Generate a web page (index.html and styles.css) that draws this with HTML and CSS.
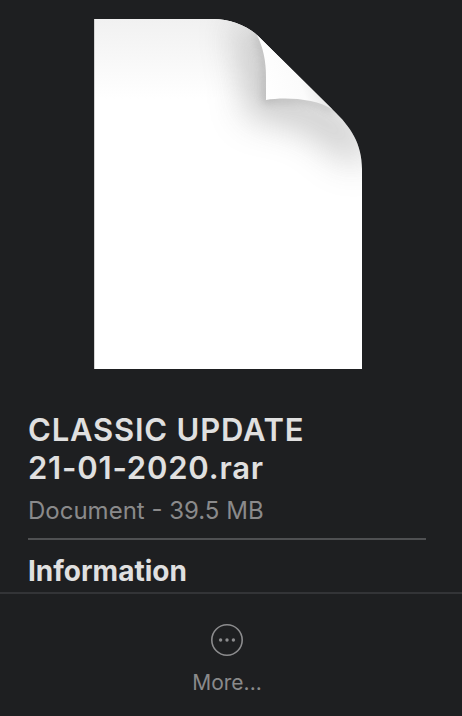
FILE: index.html
```html
<!DOCTYPE html>
<html lang="en">
<head>
<meta charset="utf-8">
<title>File preview</title>
<link rel="stylesheet" href="styles.css">
</head>
<body>
<main class="panel">
  <section class="content">
    <div class="preview">
      <svg class="doc" width="268" height="350" viewBox="0 0 268 350" aria-hidden="true">
        <defs>
          <linearGradient id="top" gradientUnits="userSpaceOnUse" x1="0" y1="0" x2="0" y2="80">
            <stop offset="0" stop-color="#f1f1f1"/>
            <stop offset="1" stop-color="#f1f1f1" stop-opacity="0"/>
          </linearGradient>
          <linearGradient id="flap" gradientUnits="userSpaceOnUse" x1="172" y1="81" x2="222" y2="62">
            <stop offset="0" stop-color="#ffffff"/>
            <stop offset="0.7" stop-color="#fbfbfb"/>
            <stop offset="1" stop-color="#ececec"/>
          </linearGradient>
          <filter id="soft" x="-50%" y="-50%" width="200%" height="200%">
            <feGaussianBlur stdDeviation="19"/>
          </filter>
          <filter id="tight" x="-20%" y="-20%" width="140%" height="140%">
            <feGaussianBlur stdDeviation="4"/>
          </filter>
          <clipPath id="sheet">
            <path d="M0 0H119C135 0 152 6 163 16L239 91C257 108 268 125 268 150V350H0Z"/>
          </clipPath>
        </defs>
        <path d="M0 0H119C135 0 152 6 163 16L239 91C257 108 268 125 268 150V350H0Z" fill="#ffffff"/>
        <g clip-path="url(#sheet)">
          <rect width="268" height="80" fill="url(#top)"/>
          <path class="shade-wide" d="M150 6C165 28 168 50 168 84C195 84 225 90 268 135" filter="url(#soft)"/>
          <path class="shade-near" d="M163 16C169 28 172 42 172 58V81C190 78 222 79 239 91" filter="url(#tight)"/>
          <rect width="1" height="350" fill="#d4d4d4"/>
        </g>
        <path d="M163 16C169 28 172 42 172 58V81C190 78 222 79 239 91Z" fill="url(#flap)"/>
      </svg>
    </div>
    <h1 class="title">CLASSIC UPDATE<br>21-01-2020.rar</h1>
    <p class="meta">Document - 39.5 MB</p>
    <hr class="rule">
    <h2 class="heading">Information</h2>
  </section>
  <footer class="footer">
    <svg class="more-icon" width="32" height="32" viewBox="0 0 32 32" aria-hidden="true">
      <circle cx="16" cy="16" r="15.2" fill="none" stroke="#8c8c8e" stroke-width="1.6"/>
      <circle cx="9.6" cy="16" r="1.7" fill="#8c8c8e"/>
      <circle cx="16" cy="16" r="1.7" fill="#8c8c8e"/>
      <circle cx="22.4" cy="16" r="1.7" fill="#8c8c8e"/>
    </svg>
    <span class="more-label">More...</span>
  </footer>
</main>
</body>
</html>
```
FILE: styles.css
```css
* { box-sizing: border-box; }
html, body { margin: 0; height: 100%; }
body {
  background: #1e1f21;
  font-family: Inter, "Liberation Sans", sans-serif;
  overflow: hidden;
}
.panel {
  height: 716px;
  display: flex;
  flex-direction: column;
}
.content {
  height: 592px;
  padding: 19px 36px 0 28px;
  overflow: hidden;
}
.preview {
  display: flex;
  justify-content: flex-start;
  padding-left: 66px;
}
.doc { display: block; flex: none; }
.shade-wide {
  fill: none;
  stroke: #8f8f8f;
  stroke-width: 24;
  opacity: 0.7;
}
.shade-near {
  fill: none;
  stroke: #8a8a8a;
  stroke-width: 4;
  opacity: 0.6;
}
.title {
  margin: 42px 0 0;
  font-size: 31px;
  line-height: 38px;
  font-weight: 600;
  letter-spacing: 0.8px;
  color: #e0e0e0;
}
.meta {
  margin: 10px 0 0;
  font-size: 24px;
  line-height: 28px;
  color: #8a8a8b;
}
.rule {
  margin: 13px 0 0;
  border: 0;
  height: 2px;
  background: #4f5052;
}
.heading {
  margin: 14px 0 0;
  font-size: 28px;
  line-height: 34px;
  font-weight: 700;
  color: #e0e0e0;
}
.footer {
  flex: 1;
  border-top: 2px solid #333437;
  display: flex;
  flex-direction: column;
  align-items: center;
  padding: 30px 8px 0 0;
}
.more-icon { display: block; }
.more-label {
  margin-top: 13px;
  font-size: 21px;
  line-height: 28px;
  color: #8a8a8b;
}
```
